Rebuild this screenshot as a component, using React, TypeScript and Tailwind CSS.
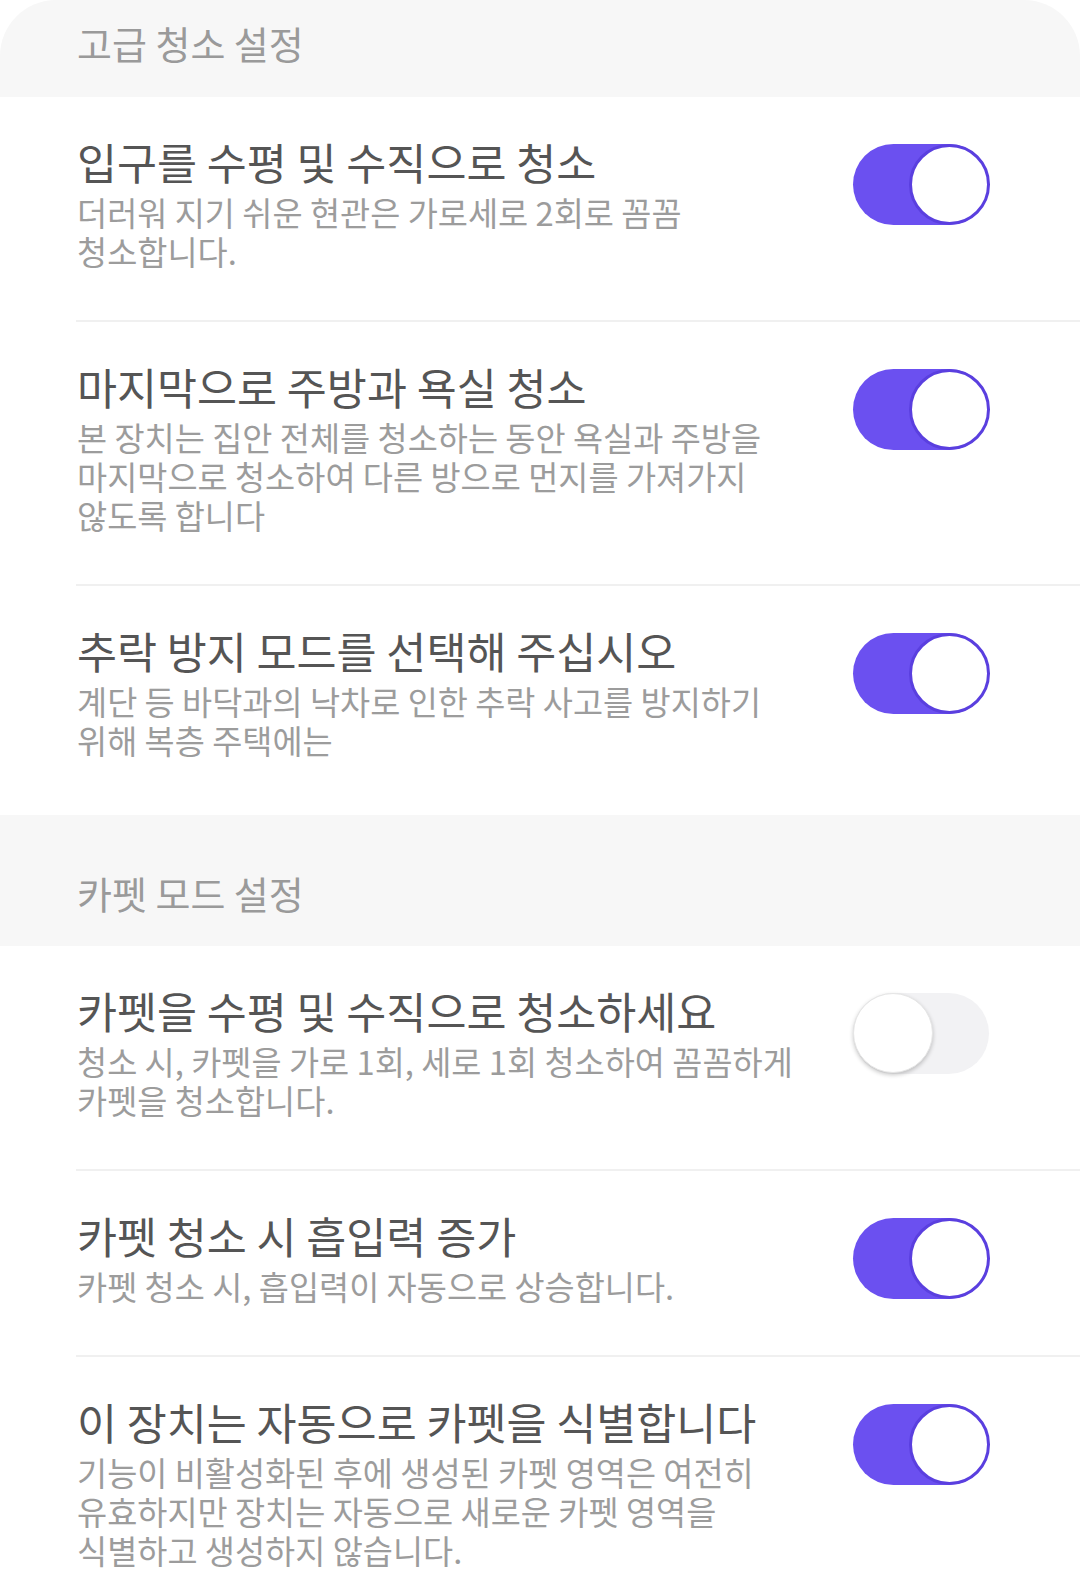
import React from 'react';

interface SettingItem {
  title: string;
  desc: string[];
  on: boolean;
}

const advanced: SettingItem[] = [
  {
    title: '입구를 수평 및 수직으로 청소',
    desc: ['더러워 지기 쉬운 현관은 가로세로 2회로 꼼꼼', '청소합니다.'],
    on: true,
  },
  {
    title: '마지막으로 주방과 욕실 청소',
    desc: [
      '본 장치는 집안 전체를 청소하는 동안 욕실과 주방을',
      '마지막으로 청소하여 다른 방으로 먼지를 가져가지',
      '않도록 합니다',
    ],
    on: true,
  },
  {
    title: '추락 방지 모드를 선택해 주십시오',
    desc: ['계단 등 바닥과의 낙차로 인한 추락 사고를 방지하기', '위해 복층 주택에는'],
    on: true,
  },
];

const carpet: SettingItem[] = [
  {
    title: '카펫을 수평 및 수직으로 청소하세요',
    desc: ['청소 시, 카펫을 가로 1회, 세로 1회 청소하여 꼼꼼하게', '카펫을 청소합니다.'],
    on: false,
  },
  {
    title: '카펫 청소 시 흡입력 증가',
    desc: ['카펫 청소 시, 흡입력이 자동으로 상승합니다.'],
    on: true,
  },
  {
    title: '이 장치는 자동으로 카펫을 식별합니다',
    desc: [
      '기능이 비활성화된 후에 생성된 카펫 영역은 여전히',
      '유효하지만 장치는 자동으로 새로운 카펫 영역을',
      '식별하고 생성하지 않습니다.',
    ],
    on: true,
  },
];

function Toggle({ on }: { on: boolean }) {
  if (on) {
    return (
      <div className="relative w-[136px] h-[81px] rounded-full bg-[#6b50f0] shrink-0">
        <div className="absolute right-[-1px] top-0 w-[81px] h-[81px] rounded-full bg-white border-[3px] border-[#5a3fdf]" />
      </div>
    );
  }
  return (
    <div className="relative w-[136px] h-[81px] rounded-full bg-[#f2f2f4] shrink-0">
      <div className="absolute left-0 top-0 w-[80px] h-[80px] rounded-full bg-white border border-[#e6e6e6] shadow-[0_2px_4px_rgba(0,0,0,0.22)]" />
    </div>
  );
}

function Row({ item, last, endPad }: { item: SettingItem; last: boolean; endPad: string }) {
  return (
    <div
      className={
        last
          ? `ml-[76px] flex items-start pt-[41px] ${endPad}`
          : 'ml-[76px] flex items-start pt-[41px] pb-[50px] border-b-2 border-[#f0f0f0]'
      }
    >
      <div className="w-[736px] pl-[1px]">
        <div className="text-[43.5px] leading-[48px] text-[#555555] whitespace-nowrap">{item.title}</div>
        <div className="mt-[6px] text-[32.75px] leading-[39px] text-[#9c9c9c]">
          {item.desc.map((line) => (
            <div key={line} className="whitespace-nowrap">
              {line}
            </div>
          ))}
        </div>
      </div>
      <div className="ml-[41px] mt-[6px]">
        <Toggle on={item.on} />
      </div>
    </div>
  );
}

export default function App() {
  return (
    <div
      className="w-[1080px] min-h-[1592px] bg-white"
      style={{ fontFamily: '"Noto Sans CJK KR", "Noto Sans", sans-serif' }}
    >
      <div className="bg-[#f7f7f7] rounded-t-[56px] pt-[23px] pb-[34px] pl-[77px] text-[38px] leading-[40px] text-[#9a9a9a]">
        고급 청소 설정
      </div>
      {advanced.map((item, i) => (
        <Row key={item.title} item={item} last={i === advanced.length - 1} endPad="pb-[56px]" />
      ))}
      <div className="bg-[#f7f7f7] pt-[58px] pb-[33px] pl-[77px] text-[38px] leading-[40px] text-[#9a9a9a]">
        카펫 모드 설정
      </div>
      {carpet.map((item, i) => (
        <Row key={item.title} item={item} last={i === carpet.length - 1} endPad="pb-[20px]" />
      ))}
    </div>
  );
}
